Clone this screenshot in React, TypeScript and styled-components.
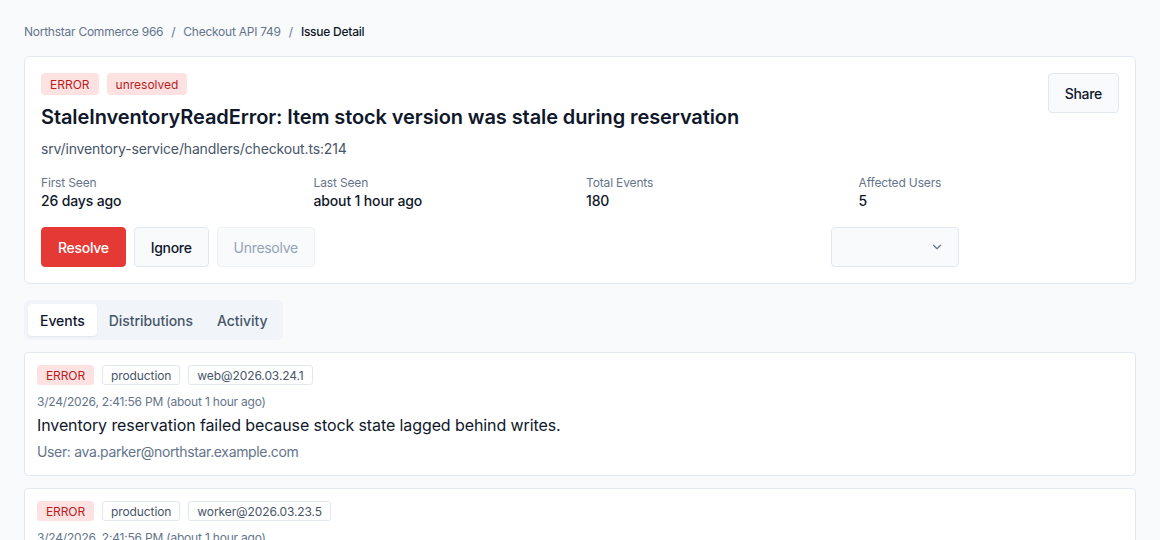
import React from "react";
import styled, { createGlobalStyle } from "styled-components";
import { ChevronDown } from "lucide-react";

interface EventItem {
  id: string;
  release: string;
  time: string;
  message: string;
  user: string;
}

const events: Array<EventItem> = [
  {
    id: "e1",
    release: "web@2026.03.24.1",
    time: "3/24/2026, 2:41:56 PM (about 1 hour ago)",
    message: "Inventory reservation failed because stock state lagged behind writes.",
    user: "ava.parker@northstar.example.com"
  },
  {
    id: "e2",
    release: "worker@2026.03.23.5",
    time: "3/24/2026, 2:41:56 PM (about 1 hour ago)",
    message: "Inventory reservation failed because stock state lagged behind writes.",
    user: "liam.chen@northstar.example.com"
  }
];

const stats = [
  { label: "First Seen", value: "26 days ago" },
  { label: "Last Seen", value: "about 1 hour ago" },
  { label: "Total Events", value: "180" },
  { label: "Affected Users", value: "5" }
];

export default function App() {
  return (
    <>
      <GlobalStyle />
      <Page>
        <Breadcrumb>
          <Crumb>Northstar Commerce 966</Crumb>
          <Sep>/</Sep>
          <Crumb>Checkout API 749</Crumb>
          <Sep>/</Sep>
          <Crumb $current>Issue Detail</Crumb>
        </Breadcrumb>

        <Card>
          <HeaderRow>
            <div>
              <BadgeRow>
                <Badge>ERROR</Badge>
                <Badge>unresolved</Badge>
              </BadgeRow>
              <Title>
                StaleInventoryReadError: Item stock version was stale during
                reservation
              </Title>
              <Culprit>srv/inventory-service/handlers/checkout.ts:214</Culprit>
            </div>
            <Button>Share</Button>
          </HeaderRow>

          <StatsGrid>
            {stats.map(s => (
              <div key={s.label}>
                <StatLabel>{s.label}</StatLabel>
                <StatValue>{s.value}</StatValue>
              </div>
            ))}
          </StatsGrid>

          <Actions>
            <Button $variant="danger">Resolve</Button>
            <Button>Ignore</Button>
            <Button disabled>Unresolve</Button>
            <Select>
              <ChevronDown size={14} strokeWidth={2} />
            </Select>
          </Actions>
        </Card>

        <Tabs>
          <Tab $active>Events</Tab>
          <Tab>Distributions</Tab>
          <Tab>Activity</Tab>
        </Tabs>

        <EventList>
          {events.map(ev => (
            <EventCard key={ev.id}>
              <TagRow>
                <Tag $kind="error">ERROR</Tag>
                <Tag>production</Tag>
                <Tag>{ev.release}</Tag>
              </TagRow>
              <EventTime>{ev.time}</EventTime>
              <EventMessage>{ev.message}</EventMessage>
              <EventUser>User: {ev.user}</EventUser>
            </EventCard>
          ))}
        </EventList>
      </Page>
    </>
  );
}

const GlobalStyle = createGlobalStyle`
  body {
    margin: 0;
    background: #f8fafc;
    font-family: Inter, "Noto Sans", sans-serif;
    color: #0f172a;
  }
  * { box-sizing: border-box; }
`;

const Page = styled.div`
  padding: 23px 24px 24px;
`;

const Breadcrumb = styled.nav`
  display: flex;
  align-items: center;
  gap: 8px;
  font-size: 12px;
  line-height: 18px;
  letter-spacing: -0.25px;
  margin-bottom: 15px;
`;

const Crumb = styled.span<{ $current?: boolean }>`
  color: ${p => (p.$current ? "#0f172a" : "#64748b")};
  font-weight: ${p => (p.$current ? 500 : 400)};
`;

const Sep = styled.span`
  color: #64748b;
`;

const Card = styled.section`
  background: #fff;
  border: 1px solid #e2e8f0;
  border-radius: 6px;
  padding: 16px;
`;

const HeaderRow = styled.div`
  display: flex;
  justify-content: space-between;
  align-items: flex-start;
`;

const BadgeRow = styled.div`
  display: flex;
  gap: 8px;
  margin-bottom: 8px;
`;

const Badge = styled.span`
  display: inline-flex;
  align-items: center;
  height: 22px;
  padding: 0 9px;
  border-radius: 4px;
  background: #fee2e2;
  color: #b91c1c;
  font-size: 12px;
`;

const Title = styled.h1`
  margin: 0;
  font-size: 20px;
  line-height: 28px;
  font-weight: 600;
  letter-spacing: -0.1px;
  color: #0f172a;
`;

const Culprit = styled.div`
  margin-top: 8px;
  font-size: 14px;
  line-height: 20px;
  letter-spacing: -0.15px;
  color: #475569;
`;

const StatsGrid = styled.div`
  display: grid;
  grid-template-columns: repeat(4, 1fr);
  gap: 12px;
  margin-top: 16px;
`;

const StatLabel = styled.div`
  font-size: 12px;
  line-height: 16px;
  letter-spacing: -0.15px;
  color: #64748b;
`;

const StatValue = styled.div`
  font-size: 14px;
  line-height: 20px;
  font-weight: 500;
  letter-spacing: -0.15px;
  color: #0f172a;
`;

const Actions = styled.div`
  display: flex;
  align-items: center;
  gap: 8px;
  margin-top: 16px;
  max-width: 918px;
`;

const Button = styled.button<{ $variant?: "danger" }>`
  height: 40px;
  padding: 0 16px;
  border-radius: 4px;
  font-family: inherit;
  font-size: 14px;
  font-weight: 500;
  letter-spacing: -0.3px;
  cursor: pointer;
  border: 1px solid ${p => (p.$variant === "danger" ? "#e53935" : "#e2e8f0")};
  background: ${p => (p.$variant === "danger" ? "#e53935" : "#f8fafc")};
  color: ${p => (p.$variant === "danger" ? "#fff" : "#0f172a")};

  &:disabled {
    cursor: default;
    color: #94a3b8;
    border-color: #eef2f6;
    background: #f8fafc;
    font-weight: 400;
  }
`;

const Select = styled.div`
  margin-left: auto;
  width: 128px;
  height: 40px;
  border: 1px solid #e2e8f0;
  border-radius: 4px;
  background: #f8fafc;
  display: flex;
  align-items: center;
  justify-content: flex-end;
  padding-right: 14px;
  color: #64748b;
`;

const Tabs = styled.div`
  display: inline-flex;
  margin-top: 16px;
  padding: 4px;
  background: #f1f5f9;
  border-radius: 6px;
`;

const Tab = styled.button<{ $active?: boolean }>`
  height: 32px;
  padding: 0 12px;
  border: none;
  border-radius: 4px;
  font-family: inherit;
  font-size: 14px;
  font-weight: 500;
  letter-spacing: -0.05px;
  cursor: pointer;
  background: ${p => (p.$active ? "#fff" : "transparent")};
  color: ${p => (p.$active ? "#0f172a" : "#475569")};
  box-shadow: ${p => (p.$active ? "0 1px 2px rgba(15,23,42,0.06)" : "none")};
`;

const EventList = styled.div`
  display: flex;
  flex-direction: column;
  gap: 12px;
  margin-top: 12px;
`;

const EventCard = styled.article`
  background: #fff;
  border: 1px solid #e2e8f0;
  border-radius: 4px;
  padding: 12px;
`;

const TagRow = styled.div`
  display: flex;
  gap: 8px;
  margin-bottom: 8px;
`;

const Tag = styled.span<{ $kind?: "error" }>`
  display: inline-flex;
  align-items: center;
  height: 20px;
  padding: 0 8px;
  border-radius: 3px;
  font-size: 12px;
  letter-spacing: -0.1px;
  border: 1px solid ${p => (p.$kind === "error" ? "#fee2e2" : "#e2e8f0")};
  background: ${p => (p.$kind === "error" ? "#fee2e2" : "#fff")};
  color: ${p => (p.$kind === "error" ? "#b91c1c" : "#475569")};
`;

const EventTime = styled.div`
  font-size: 12px;
  line-height: 18px;
  letter-spacing: -0.2px;
  color: #64748b;
`;

const EventMessage = styled.div`
  margin-top: 2px;
  font-size: 16px;
  line-height: 24px;
  letter-spacing: -0.1px;
  color: #0f172a;
`;

const EventUser = styled.div`
  margin-top: 4px;
  font-size: 14px;
  line-height: 22px;
  letter-spacing: -0.35px;
  color: #64748b;
`;
